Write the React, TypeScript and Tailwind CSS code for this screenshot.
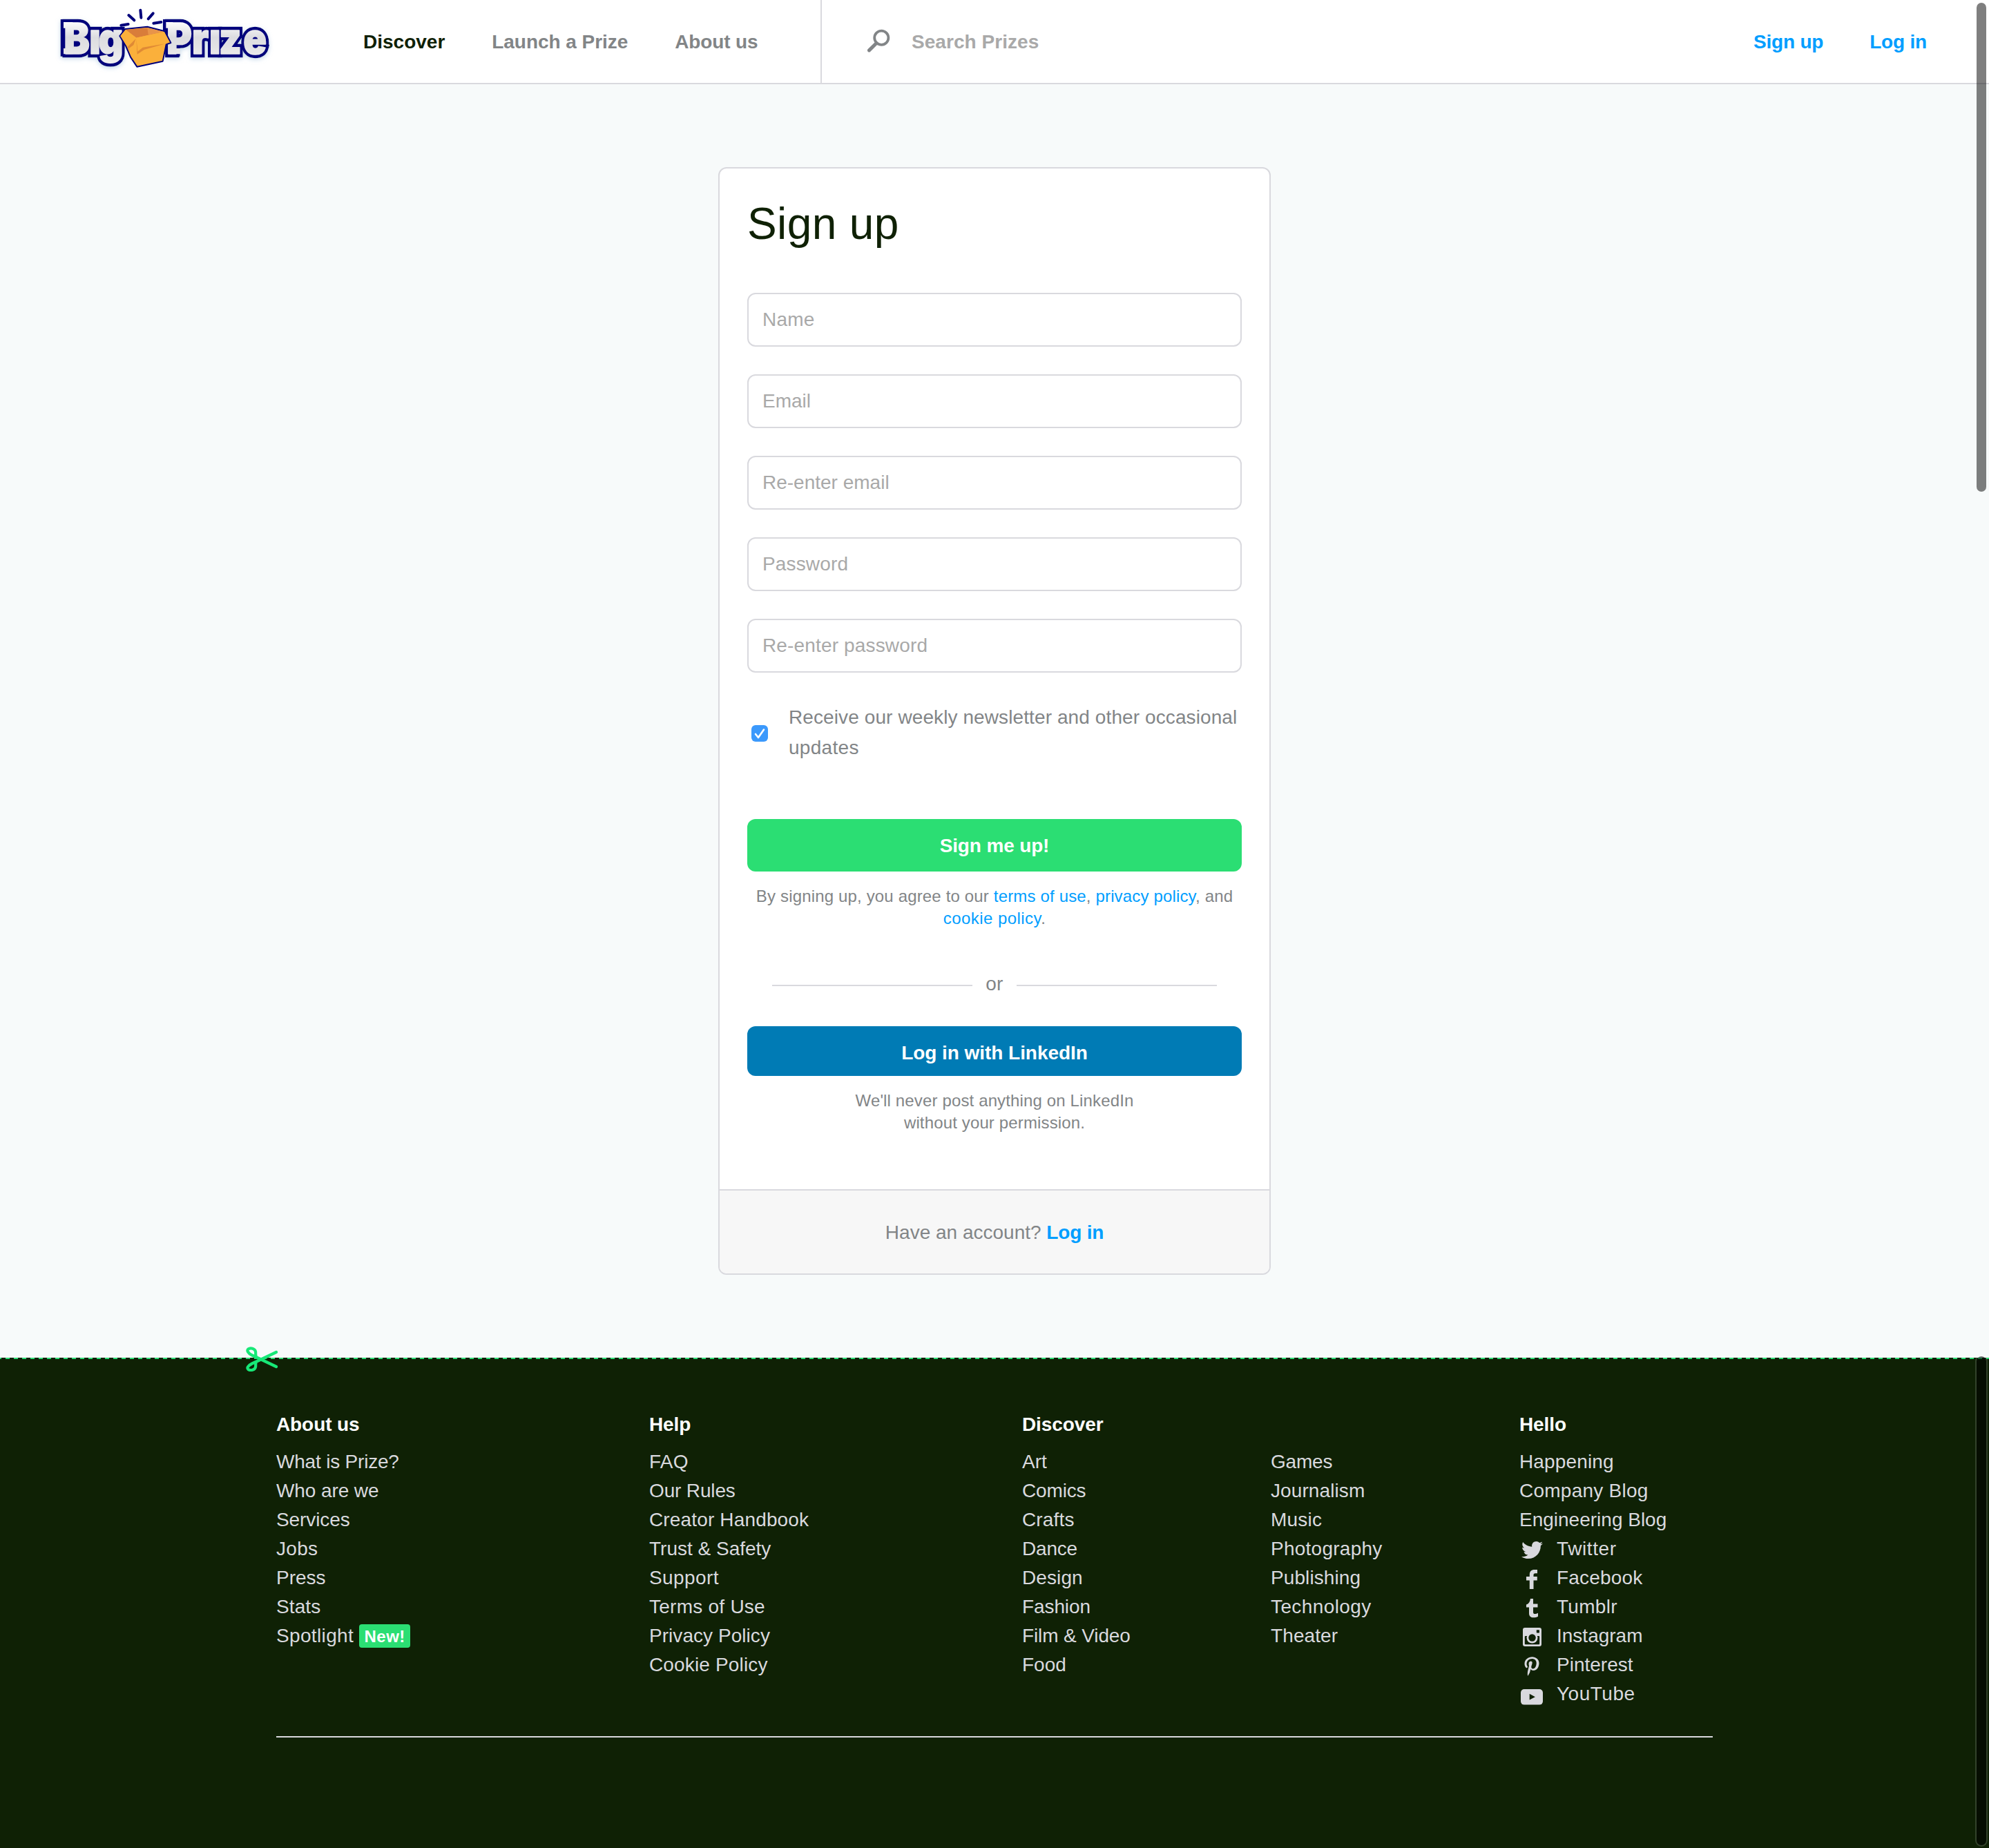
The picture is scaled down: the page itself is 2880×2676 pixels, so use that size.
import type { ReactNode } from 'react';
import { FaPinterestP, FaTwitter } from 'react-icons/fa';

type Item = { label: string; track?: string; badge?: string; icon?: ReactNode };

const fields: Item[] = [
  { label: 'Name', track: 'tracking-[0.2px]' },
  { label: 'Email', track: 'tracking-[0px]' },
  { label: 'Re-enter email', track: 'tracking-[0px]' },
  { label: 'Password', track: 'tracking-[0.15px]' },
  { label: 'Re-enter password', track: 'tracking-[0.15px]' },
];

const about: Item[] = [
  { label: 'What is Prize?', track: 'tracking-[-0.2px]' },
  { label: 'Who are we', track: 'tracking-[-0.1px]' },
  { label: 'Services', track: 'tracking-[-0.1px]' },
  { label: 'Jobs', track: 'tracking-[0.3px]' },
  { label: 'Press' },
  { label: 'Stats', track: 'tracking-[0.1px]' },
  { label: 'Spotlight', track: 'tracking-[0.35px]', badge: 'New!' },
];

const help: Item[] = [
  { label: 'FAQ', track: 'tracking-[0.2px]' },
  { label: 'Our Rules', track: 'tracking-[-0.15px]' },
  { label: 'Creator Handbook', track: 'tracking-[0.15px]' },
  { label: 'Trust & Safety' },
  { label: 'Support', track: 'tracking-[0.4px]' },
  { label: 'Terms of Use', track: 'tracking-[0.25px]' },
  { label: 'Privacy Policy', track: 'tracking-[0.05px]' },
  { label: 'Cookie Policy', track: 'tracking-[0.15px]' },
];

const discoverA: Item[] = [
  { label: 'Art' },
  { label: 'Comics', track: 'tracking-[-0.15px]' },
  { label: 'Crafts', track: 'tracking-[0.15px]' },
  { label: 'Dance', track: 'tracking-[-0.2px]' },
  { label: 'Design', track: 'tracking-[0.1px]' },
  { label: 'Fashion', track: 'tracking-[-0.1px]' },
  { label: 'Film & Video', track: 'tracking-[-0.12px]' },
  { label: 'Food' },
];

const discoverB: Item[] = [
  { label: 'Games', track: 'tracking-[-0.2px]' },
  { label: 'Journalism', track: 'tracking-[0.1px]' },
  { label: 'Music', track: 'tracking-[0.2px]' },
  { label: 'Photography', track: 'tracking-[0.25px]' },
  { label: 'Publishing', track: 'tracking-[0.1px]' },
  { label: 'Technology', track: 'tracking-[0.4px]' },
  { label: 'Theater', track: 'tracking-[0.1px]' },
];

function FacebookIcon() {
  return (
    <svg className="h-7 w-4" viewBox="0 0 16 28" fill="currentColor">
      <path d="M4.8 28V15.6H0V10h4.8V7.2C4.8 2.5 7.5 0 11.8 0H16v5.2h-2.9c-2 0-2.600.9-2.600 2.7V10h5.3v5.600h-5.300V28z" />
    </svg>
  );
}

function TumblrIcon() {
  return (
    <svg className="h-7 w-[17px]" viewBox="0 0 17 28" fill="currentColor">
      <path d="M6 0h4v7.500h6.500v5H10v7c0 2 1 2.600 2.500 2.600 1.500 0 2.800-.500 4.500-1.300v5c-2 1.200-4 1.500-6.500 1.500C6 27.300 4 25 4 21v-8.500H0v-4C3.500 7.500 5.500 4.500 6 0z" />
    </svg>
  );
}

function InstagramIcon() {
  return (
    <svg className="size-[27px]" viewBox="0 0 27 27">
      <rect width="27" height="27" rx="3" fill="#d9d9de" />
      <rect x="2.8" y="12" width="21.4" height="12.3" rx="1" fill="#0f2105" />
      <circle cx="13.5" cy="14.5" r="8" fill="#d9d9de" />
      <circle cx="13.5" cy="14.5" r="5.2" fill="#0f2105" />
      <rect x="19.8" y="3.2" width="4.2" height="4.2" rx=".6" fill="#0f2105" />
    </svg>
  );
}

function YouTubeIcon() {
  return (
    <svg className="h-[23px] w-8" viewBox="0 0 32 23">
      <rect width="32" height="22.6" rx="5" fill="#d9d9de" />
      <path d="M12.7 6.8v8.8l8.2-4.4z" fill="#0f2105" />
    </svg>
  );
}

const hello: Item[] = [
  { label: 'Happening', track: 'tracking-[0.15px]' },
  { label: 'Company Blog', track: 'tracking-[0.25px]' },
  { label: 'Engineering Blog' },
  { label: 'Twitter', track: 'tracking-[0.6px]', icon: <FaTwitter size={31} className="mt-0.5" /> },
  { label: 'Facebook', track: 'tracking-[0.2px]', icon: <span className="mt-1"><FacebookIcon /></span> },
  { label: 'Tumblr', track: 'tracking-[0.3px]', icon: <span className="mt-1"><TumblrIcon /></span> },
  { label: 'Instagram', track: 'tracking-[0px]', icon: <span className="mt-0.5"><InstagramIcon /></span> },
  { label: 'Pinterest', icon: <FaPinterestP size={28} className="mt-1" /> },
  { label: 'YouTube', track: 'tracking-[0.5px]', icon: <span className="mt-2"><YouTubeIcon /></span> },
];

function Logo() {
  const glyphs = (
    <>
      <tspan x="108 231 275">Bıg</tspan>
      <tspan x="604 727 810 857 974">Prıze</tspan>
    </>
  );
  return (
    <svg className="h-[120px] w-[360px] shrink-0" viewBox="0 0 1080 360">
      <defs>
        <linearGradient id="face" gradientUnits="userSpaceOnUse" x1="0" y1="90" x2="0" y2="280">
          <stop offset="0" stopColor="#ffffff" />
          <stop offset=".38" stopColor="#dcdce0" />
          <stop offset=".6" stopColor="#e2e2e4" />
          <stop offset="1" stopColor="#f2f2f2" />
        </linearGradient>
        <filter id="glow" x="-10%" y="-20%" width="120%" height="150%">
          <feDropShadow dx="0" dy="6" stdDeviation="9" floodColor="#9fc0dc" floodOpacity=".6" />
        </filter>
      </defs>
      <g filter="url(#glow)">
        <g transform="scale(.9 1)" className="font-['Inter'] font-black" fontSize="186" strokeLinejoin="miter">
          <text y="233" fill="#00007b" stroke="#00007b" strokeWidth="32">{glyphs}</text>
        </g>
        <path d="M83 84h60v50h-40v60h-20z M83 194h60v51H83z M528 84h60v50h-60z M542 194h60v51h-60z" fill="#00007b" />
        <g transform="scale(.9 1)" className="font-['Inter'] font-black" fontSize="186" strokeLinejoin="round" aria-hidden="true">
          <text y="233" fill="url(#face)" stroke="url(#face)" strokeWidth="5">{glyphs}</text>
        </g>
        <path d="M96 96h40v26h-40z M96 210h40v25h-40z M541 96h30v26h-30z M555 210h48v25h-48z" fill="url(#face)" />
      </g>
      <g stroke="#00007b" strokeWidth="12" strokeLinecap="round">
        <path d="M346 110l31-5M379 66l24 22M430 44l3 33M485 58l-21 24M487 101l33-5" />
      </g>
      <path d="M340 156l24-30 96-10 76 20 26 50-20 7-15 73-112 24-28-42-20-47z" fill="#fbb03b" stroke="#00007b" strokeWidth="6" strokeLinejoin="round" />
      <path d="M366 129l94-8 70 17-118 26z" fill="#d97d3a" />
      <path d="M460 121l70 17-66 14z" fill="#e8944a" />
      <path d="M366 129l46 35 120-26 26 46-118 22-22 24-8-64-36 38-31-48z" fill="#fbb03b" />
      <path d="M412 166l6 58 22-18 98-16-50 14-42 12-30 20z" fill="#e08a35" />
      <path d="M410 168l-36 36 12 20-6-14 20-14z" fill="#e08a35" />
    </svg>
  );
}

function Header() {
  return (
    <header className="flex h-[122px] border-b-2 border-[#d9d9de] bg-white text-[28px] font-bold">
      <div className="flex h-[120px] w-[1190px] border-r-2 border-[#d9d9de] pl-[60px]">
        <Logo />
        <nav className="ml-[106px] flex gap-[68px] leading-[121px] whitespace-nowrap text-[#828587]">
          <a className="text-[#0f2105]">Discover</a>
          <a className="tracking-[-0.05px]">Launch a Prize</a>
          <a className="tracking-[-0.15px]">About us</a>
        </nav>
      </div>
      <div className="flex h-[120px] flex-1 pl-[66px]">
        <svg className="mt-[42px] h-9 w-9" viewBox="0 0 36 36" fill="none" stroke="#828587">
          <circle cx="20.3" cy="12.7" r="10.1" strokeWidth="3.8" />
          <path d="M13 20.5L2.5 30.900" strokeWidth="5" strokeLinecap="round" />
        </svg>
        <input
          className="ml-[28px] h-[121px] flex-1 bg-transparent tracking-[0.05px] outline-none placeholder:text-[#a9a9a9]"
          placeholder="Search Prizes"
        />
      </div>
      <div className="flex gap-[67px] pr-[90px] leading-[121px] tracking-[-0.2px] whitespace-nowrap text-[#009eff]">
        <a>Sign up</a>
        <a>Log in</a>
      </div>
    </header>
  );
}

function SignupCard() {
  return (
    <section className="mx-auto w-[800px] overflow-hidden rounded-[12px] border-2 border-[#d9d9de] bg-white text-[28px] text-[#828587]">
      <div className="px-10 pt-10 pb-20">
        <h1 className="mb-[60px] text-[64px] leading-[80px] tracking-[0.4px] text-[#0f2105]">Sign up</h1>
        <div className="flex flex-col gap-10">
          {fields.map((f) => (
            <input
              key={f.label}
              placeholder={f.label}
              className={`h-[78px] w-full rounded-[12px] border-2 border-[#d9d9de] pl-5 outline-none placeholder:text-[#a9a9a9] ${f.track}`}
            />
          ))}
        </div>
        <label className="mt-[43px] flex items-center pl-1.5">
          <span className="mt-0.5 flex size-6 shrink-0 items-center justify-center rounded-[6px] bg-[#3b99fc]">
            <svg className="size-6" viewBox="0 0 24 24" fill="none" stroke="white" strokeWidth="2.600" strokeLinecap="round" strokeLinejoin="round">
              <path d="M6 13l4 5L18 6.500" />
            </svg>
          </span>
          <span className="ml-[30px] leading-[44px] tracking-[0.1px] whitespace-nowrap">
            Receive our weekly newsletter and other occasional
            <br />
            <span className="tracking-[0.3px]">updates</span>
          </span>
        </label>
        <button className="mt-[81px] block h-[76px] w-full rounded-[12px] bg-[#2bde73] leading-[77px] font-bold tracking-[-0.15px] text-white">
          Sign me up!
        </button>
        <p className="mt-5 text-center text-[24px] leading-8 tracking-[0.16px] whitespace-nowrap">
          By signing up, you agree to our <a className="text-[#009eff]">terms of use</a>,{' '}
          <a className="text-[#009eff]">privacy policy</a>, and
          <br />
          <span className="tracking-[0.45px]">
            <a className="text-[#009eff]">cookie policy</a>.
          </span>
        </p>
        <div className="mt-[57px] flex h-11 items-center justify-between px-9">
          <span className="mt-1 h-0.5 w-[290px] bg-[#d9d9de]" />
          <span className="leading-[44px] tracking-[0.4px]">or</span>
          <span className="mt-1 h-0.5 w-[290px] bg-[#d9d9de]" />
        </div>
        <button className="mt-[39px] block h-[72px] w-full rounded-[12px] bg-[#007bb5] leading-[77px] font-bold tracking-[-0.05px] text-white">
          Log in with LinkedIn
        </button>
        <p className="mt-5 text-center text-[24px] leading-8 tracking-[0.14px]">
          We'll never post anything on LinkedIn
          <br />
          without your permission.
        </p>
      </div>
      <div className="h-[122px] border-t-2 border-[#d9d9de] bg-[#f7f7f7] text-center leading-[121px]">
        Have an account? <a className="font-bold tracking-[-0.2px] text-[#009eff]">Log in</a>
      </div>
    </section>
  );
}

function Column({ title, items, className }: { title?: string; items: Item[]; className: string }) {
  return (
    <div className={className}>
      <h2 className="mb-3 h-[42px] leading-[42px] font-bold tracking-[-0.1px] text-white">{title}</h2>
      <ul>
        {items.map((it) => (
          <li key={it.label} className="flex h-[42px] items-center leading-[42px] whitespace-nowrap">
            {it.icon && <span className="mr-[20px] ml-[2px] flex w-8 shrink-0 justify-center">{it.icon}</span>}
            <a className={it.track}>{it.label}</a>
            {it.badge && (
              <span className="ml-2 h-[34px] w-[74px] rounded-[4px] bg-[#2bde73] text-center text-[24px] leading-[35px] font-bold tracking-[0.5px] text-white">
                {it.badge}
              </span>
            )}
          </li>
        ))}
      </ul>
    </div>
  );
}

function Footer() {
  return (
    <footer className="relative mt-[120px] h-[710px] bg-[#0f2105] pt-[76px] text-[28px] text-[#d9d9de]">
      <div className="absolute inset-x-0 top-0 h-0.5 bg-[linear-gradient(90deg,#2bde73_0_2px,transparent_2px_8px,#2bde73_8px_12px)] bg-[length:12px_2px] bg-repeat-x" />
      <svg className="absolute -top-4 left-[356px] h-9 w-[47px]" viewBox="0 0 47 36" fill="none" stroke="#17e877" strokeWidth="4.200" strokeLinecap="round" strokeLinejoin="round">
        <path d="M44 8L22 18.500L9 24.500C3 27.500 1 31 3.500 33C6.500 35.200 13 34 14 29.500C14.600 27 13.500 25 15 22.500" />
        <path d="M44 29L22 18.500L9 12.500C3 9.500 1 5.500 3.500 3.500C6.500 1.200 13 2.500 14 7C14.600 9.500 13.500 12 15 14.500" />
      </svg>
      <div className="mx-auto w-[2080px]">
        <div className="flex">
          <Column title="About us" items={about} className="w-[540px]" />
          <Column title="Help" items={help} className="w-[540px]" />
          <Column title="Discover" items={discoverA} className="w-[360px]" />
          <Column items={discoverB} className="w-[360px]" />
          <Column title="Hello" items={hello} className="w-[280px]" />
        </div>
        <div className="mt-10 h-0.5 bg-[#d9d9de]" />
      </div>
    </footer>
  );
}

export default function App() {
  return (
    <div className="relative h-[2676px] w-[2880px] overflow-hidden bg-[#f7fafa] font-['Liberation_Sans',Arial,sans-serif]">
      <Header />
      <main className="pt-[120px]">
        <SignupCard />
      </main>
      <Footer />
      <div className="absolute top-1 right-1 h-[708px] w-[14px] rounded-full bg-black/50" />
      <div className="absolute right-0.5 bottom-0.5 h-[712px] w-[18px] rounded-full border-2 border-white/15 bg-black/55 bg-clip-padding" />
    </div>
  );
}
